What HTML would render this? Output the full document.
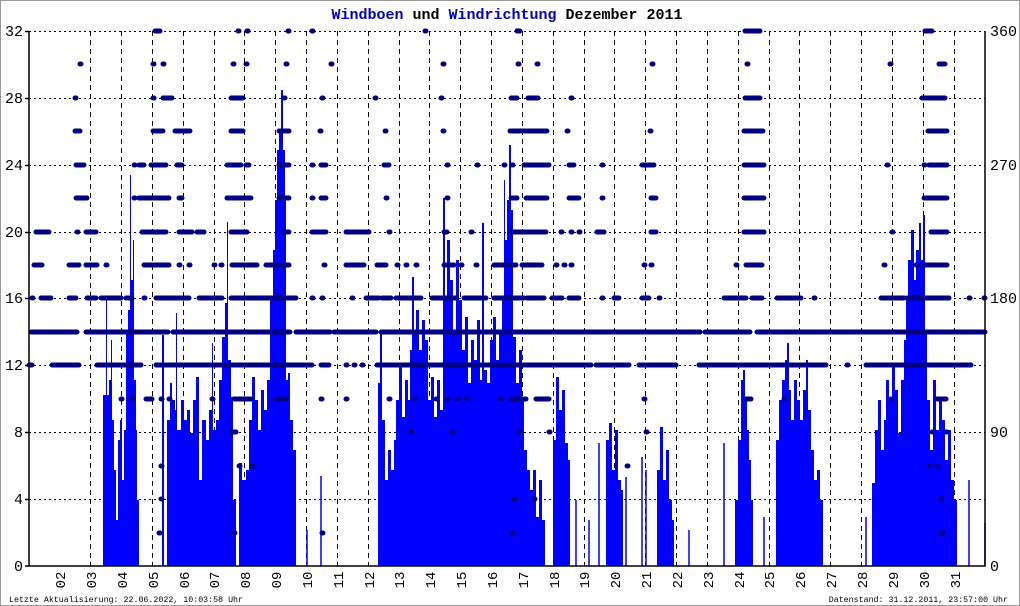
<!DOCTYPE html>
<html><head><meta charset="utf-8"><style>
html,body{margin:0;padding:0;background:#fff}
#w{position:relative;width:1018px;height:604px;border:1px solid #999;overflow:hidden}
svg{position:absolute;left:0;top:0}
text{font-family:"Liberation Mono",monospace}
</style></head><body><div id="w">
<svg width="1018" height="604" viewBox="1 1 1018 604">
<text x="507" y="19" text-anchor="middle" font-size="15" fill="#000" font-weight="bold"><tspan fill="#0000c0">Windboen</tspan> und <tspan fill="#0000c0">Windrichtung</tspan> Dezember 2011</text>
<!-- grid -->
<g stroke="#000" stroke-width="1" stroke-dasharray="2,3" fill="none">
<path d="M29 31.5H985M29 98.5H985M29 165.5H985M29 232.5H985M29 298.5H985M29 365.5H985M29 432.5H985M29 499.5H985"/>
</g>
<g stroke="#000" stroke-width="1" stroke-dasharray="5,4" fill="none">
<path d="M90.5 31V566M121.5 31V566M152.5 31V566M183.5 31V566M214.5 31V566M244.5 31V566M275.5 31V566M306.5 31V566M337.5 31V566M368.5 31V566M399.5 31V566M429.5 31V566M460.5 31V566M491.5 31V566M522.5 31V566M553.5 31V566M584.5 31V566M614.5 31V566M645.5 31V566M676.5 31V566M707.5 31V566M738.5 31V566M769.5 31V566M799.5 31V566M830.5 31V566M861.5 31V566M892.5 31V566M923.5 31V566M954.5 31V566"/>
</g>
<!-- bars -->
<g fill="#0000ff" stroke="none">
<path d="M103 566 V395 H106 V300 H107 V395 H109 V380 H111 V340 H112 V420 H114 V470 H116 V520 H118 V440 H120 V420 H122 V480 H124 V430 H126 V330 H128 V310 H130 V175 H131 V280 H133 V240 H134 V380 H136 V430 H137 V500 H139 V566 Z"/>
<path d="M162 566 V335 H164 V566 H167 V420 H170 V383 H172 V400 H175 V410 H176 V313 H177 V430 H181 V400 H184 V420 H187 V410 H190 V433 H193 V400 H196 V377 H199 V480 H202 V420 H206 V440 H209 V410 H212 V343 H213 V430 H216 V420 H219 V380 H222 V337 H225 V303 H227 V222 H228 V360 H231 V397 H233 V500 H236 V566 H239 V463 H242 V480 H246 V470 H249 V420 H252 V377 H255 V400 H258 V430 H261 V390 H264 V410 H267 V380 H270 V300 H273 V250 H275 V200 H277 V150 H279 V130 H281 V90 H283 V150 H285 V200 H286 V380 H288 V373 H290 V420 H293 V450 H296 V566 Z"/>
<path d="M378 566 V383 H380 V333 H382 V420 H385 V480 H388 V450 H391 V470 H394 V440 H396 V400 H399 V367 H402 V417 H405 V380 H408 V400 H410 V350 H412 V277 H414 V330 H416 V310 H419 V350 H422 V320 H425 V340 H428 V400 H431 V377 H434 V417 H437 V380 H440 V410 H443 V198 H445 V300 H447 V240 H450 V280 H453 V330 H456 V260 H459 V300 H462 V350 H465 V317 H468 V383 H471 V340 H474 V360 H477 V320 H480 V380 H482 V223 H484 V370 H487 V383 H490 V340 H493 V317 H496 V360 H499 V330 H502 V300 H504 V180 H505 V240 H507 V200 H509 V145 H511 V210 H513 V337 H516 V383 H519 V350 H522 V400 H524 V450 H527 V470 H530 V490 H533 V470 H536 V517 H539 V480 H542 V520 H545 V566 Z"/>
<path d="M553 566 V440 H556 V377 H559 V410 H562 V390 H565 V443 H568 V460 H570 V566 Z"/>
<path d="M606 566 V440 H609 V423 H612 V470 H615 V430 H618 V480 H621 V490 H623 V566 Z"/>
<path d="M657 566 V470 H660 V427 H663 V480 H666 V450 H669 V500 H672 V520 H674 V566 Z"/>
<path d="M735 566 V500 H738 V440 H741 V380 H743 V370 H745 V400 H747 V430 H749 V460 H751 V500 H753 V566 Z"/>
<path d="M776 566 V440 H779 V400 H782 V380 H785 V360 H787 V343 H789 V390 H791 V420 H794 V380 H797 V400 H800 V420 H803 V390 H806 V360 H808 V410 H811 V450 H814 V480 H817 V470 H820 V500 H823 V566 Z"/>
<path d="M872 566 V483 H875 V430 H878 V400 H881 V450 H884 V420 H886 V380 H889 V400 H892 V367 H895 V390 H898 V433 H901 V380 H904 V340 H906 V300 H908 V260 H911 V230 H914 V280 H916 V250 H919 V223 H921 V260 H923 V215 H925 V330 H927 V400 H930 V450 H933 V380 H936 V430 H939 V400 H942 V420 H945 V460 H948 V430 H951 V480 H954 V500 H957 V566 Z"/>
</g>
<g stroke="#0000ff" stroke-width="1.5">
<path d="M307 566V530M321 566V476M576 566V500M599 566V443M642 566V457M646 566V470M626 566V477M689 566V530M724 566V443M764 566V517M866 566V517M969 566V480M985 566V523M589 566V520"/>
</g>
<!-- direction dots -->
<g stroke="#000080" stroke-width="5" stroke-linecap="round" fill="none">
<path d="M31 332H77M86 332H168M173 332H290M296 332H330M334 332H376M381 332H700M705 332H750M757 332H985"/>
<path d="M29 365H32M52 365H79M97 365H141M156 365H312M321 365H329M346 365H347M354 365H355M362 365H363M377 365H591M596 365H629M639 365H676M699 365H826M847 365H848M866 365H971"/>
<path d="M32 298h1M41 298H51M69 298H76M87 298H96M101 298H121M126 298H132M144 298h1M156 298H189M199 298H222M231 298H296M312 298h1M322 298h1M352 298h1M366 298H379M382 298H391M396 298H421M432 298H456M464 298H486M494 298H524M527 298H544M552 298H562M569 298H579M602 298h1M614 298H619M642 298H649M659 298h1M724 298H746M752 298H762M777 298H801M814 298h1M881 298H904M907 298H949M969 298h1M984 298h1"/>
<path d="M34 265H42M69 265H79M86 265H97M106 265h1M144 265H169M179 265h1M189 265h1M214 265h1M221 265h1M232 265H257M266 265H276M279 265H289M324 265h1M346 265H364M377 265H386M397 265h1M406 265h1M416 265h1M444 265H454M461 265h1M476 265h1M494 265H516M522 265H542M556 265h1M564 265h1M571 265h1M644 265h1M651 265h1M736 265h1M746 265H762M884 265h1M916 265h1M924 265H947"/>
<path d="M36 232H49M77 232h1M86 232H96M142 232H166M179 232H192M197 232H204M231 232H247M284 232H289M312 232H326M346 232H369M389 232h1M444 232H447M471 232h1M511 232H546M561 232h1M571 232h1M579 232h1M597 232H604M651 232H656M744 232H764M892 232h1M931 232H947"/>
<path d="M76 198H87M134 198h1M139 198H169M179 198H182M227 198H251M279 198H289M312 198h1M321 198H326M386 198h1M447 198h1M511 198H517M526 198H547M569 198H579M602 198h1M651 198H656M744 198H764M924 198H947"/>
<path d="M76 165H84M134 165h1M139 165H144M151 165H166M177 165H182M227 165H241M246 165H249M279 165H289M312 165h1M321 165H326M384 165H389M447 165h1M477 165h1M504 165h1M512 165h1M524 165H549M569 165H574M602 165h1M642 165H654M744 165H764M887 165h1M924 165h1M929 165H947"/>
<path d="M75 131H80M153 131H163M175 131H190M231 131H243M279 131H289M320 131h1M385 131h1M443 131h1M510 131H547M567 131h1M650 131h1M744 131H763M928 131H947"/>
<path d="M75 98h1M153 98h1M163 98H172M231 98H243M284 98h1M322 98h1M375 98h1M441 98h1M511 98H517M528 98H538M571 98h1M745 98H760M922 98H945"/>
<path d="M80 64h1M153 64h1M163 64h1M233 64h1M246 64h1M286 64h1M331 64h1M443 64h1M518 64h1M537 64h1M652 64h1M747 64h1M890 64h1M939 64H945"/>
<path d="M155 31H160M238 31h1M247 31h1M288 31h1M312 31h1M425 31h1M517 31H520M745 31H760M925 31H932"/>
<path d="M121 399h1M132 399h1M146 399H152M161 399h1M169 399h1M212 399h1M234 399H251M276 399H286M321 399h1M346 399h1M389 399h1M414 399h1M436 399h1M447 399h1M457 399h1M467 399h1M501 399h1M511 399H526M536 399H549M644 399h1M746 399H751M784 399h1M891 399h1M937 399H946"/>
<path d="M231 432H236M411 432h1M452 432h1M519 432h1M549 432h1M646 432h1M932 432h1M946 432h1"/>
<path d="M161 466h1M239 466h1M252 466h1M627 466h1M929 466h1M937 466h1"/>
<path d="M161 499h1M514 499h1M534 499h1M941 499h1"/>
<path d="M159 533h1M234 533h1M322 533h1M512 533h1M942 533h1"/>
</g>
<!-- axes -->
<g stroke="#000" stroke-width="1.5" fill="none">
<path d="M29 31V566H985V31"/>
<path d="M25 31.5H29M25 98.5H29M25 165.5H29M25 232.5H29M25 298.5H29M25 365.5H29M25 432.5H29M25 499.5H29M25 566H29"/>
</g>
<g font-size="15" fill="#000" text-anchor="end">
<text x="23" y="36">32</text><text x="23" y="103">28</text><text x="23" y="170">24</text><text x="23" y="237">20</text><text x="23" y="303">16</text><text x="23" y="370">12</text><text x="23" y="437">8</text><text x="23" y="504">4</text><text x="23" y="571">0</text>
</g>
<g font-size="15" fill="#000">
<text x="990" y="36">360</text><text x="990" y="170">270</text><text x="990" y="303">180</text><text x="990" y="437">90</text><text x="990" y="571">0</text>
</g>
<g font-size="14" fill="#000" text-anchor="middle">
<text transform="translate(65 580) rotate(-90)">02</text>
<text transform="translate(96 580) rotate(-90)">03</text>
<text transform="translate(127 580) rotate(-90)">04</text>
<text transform="translate(158 580) rotate(-90)">05</text>
<text transform="translate(189 580) rotate(-90)">06</text>
<text transform="translate(219 580) rotate(-90)">07</text>
<text transform="translate(250 580) rotate(-90)">08</text>
<text transform="translate(281 580) rotate(-90)">09</text>
<text transform="translate(312 580) rotate(-90)">10</text>
<text transform="translate(343 580) rotate(-90)">11</text>
<text transform="translate(374 580) rotate(-90)">12</text>
<text transform="translate(404 580) rotate(-90)">13</text>
<text transform="translate(435 580) rotate(-90)">14</text>
<text transform="translate(466 580) rotate(-90)">15</text>
<text transform="translate(497 580) rotate(-90)">16</text>
<text transform="translate(528 580) rotate(-90)">17</text>
<text transform="translate(559 580) rotate(-90)">18</text>
<text transform="translate(589 580) rotate(-90)">19</text>
<text transform="translate(620 580) rotate(-90)">20</text>
<text transform="translate(651 580) rotate(-90)">21</text>
<text transform="translate(682 580) rotate(-90)">22</text>
<text transform="translate(713 580) rotate(-90)">23</text>
<text transform="translate(744 580) rotate(-90)">24</text>
<text transform="translate(774 580) rotate(-90)">25</text>
<text transform="translate(805 580) rotate(-90)">26</text>
<text transform="translate(836 580) rotate(-90)">27</text>
<text transform="translate(867 580) rotate(-90)">28</text>
<text transform="translate(898 580) rotate(-90)">29</text>
<text transform="translate(929 580) rotate(-90)">30</text>
<text transform="translate(960 580) rotate(-90)">31</text>
</g>
<text x="9" y="602" font-size="8.3" fill="#000">Letzte Aktualisierung: 22.06.2022, 10:03:58 Uhr</text>
<text x="1008" y="602" font-size="8.3" fill="#000" text-anchor="end">Datenstand: 31.12.2011, 23:57:00 Uhr</text>
</svg>
</div></body></html>
